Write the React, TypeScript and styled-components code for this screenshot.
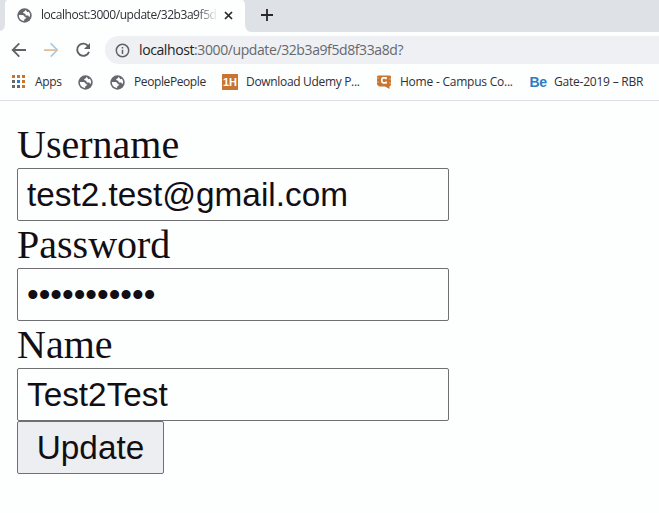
import React from 'react';
import styled, { createGlobalStyle } from 'styled-components';

const Global = createGlobalStyle`
  * { box-sizing: border-box; }
  body { margin: 0; background: #fdfefe; overflow: hidden; }
`;

const Window = styled.div`
  width: 659px;
  height: 513px;
  overflow: hidden;
  background: #fdfefe;
  font-family: 'Open Sans', 'Noto Sans', sans-serif;
  color: #2f3035;
`;

const TabStrip = styled.div`
  display: flex;
  height: 32px;
  background: #fdfefe;
`;

const StripEdge = styled.div<{ $side: 'left' | 'right' }>`
  background: #dee1e6;
  height: 32px;
  ${p => p.$side === 'left'
    ? 'width: 7px; height: 31px; clip-path: path("M0 0H7Q5 1 5 4V24Q5 30 0 31Z");'
    : 'flex: 1; clip-path: path("M0 0H417V32H8Q2 31 2 24V6Q2 2 0 0Z");'}
`;

const Tab = styled.div`
  width: 236px;
  display: flex;
  align-items: center;
  padding: 0 10px 2px 10px;
`;

const TabTitle = styled.span`
  margin-left: 9px;
  width: 183px;
  white-space: nowrap;
  font-size: 12px;
  line-height: 18px;
  letter-spacing: -0.44px;
  mask-image: linear-gradient(90deg, #000 155px, transparent 177px);
`;

const CloseIcon = styled.svg`
  flex: none;
`;

const NewTab = styled.div`
  display: flex;
  padding: 9px 0 0 18px;
`;

const Toolbar = styled.div`
  height: 36px;
  display: flex;
  align-items: center;
  padding-left: 11px;
`;

const NavIcon = styled.svg`
  flex: none;
  margin-right: 16px;
`;

const AddressBar = styled.div`
  display: flex;
  align-items: center;
  flex: 1;
  height: 28px;
  margin-left: -2px;
  padding-left: 10px;
  border-radius: 14px 0 0 14px;
  background: #eef0f3;
`;

const Url = styled.span`
  margin-left: 9px;
  font-size: 14px;
  line-height: 20px;
  white-space: nowrap;
  color: #66686d;
  letter-spacing: -0.4px;
`;

const Host = styled.span`
  color: #222327;
`;

const BookmarkBar = styled.div`
  display: grid;
  grid-template-columns: 67px 32px 112px 154px 154px 129px;
  align-items: center;
  height: 33px;
  padding: 0 0 4px 11px;
  border-bottom: 1px solid #dcdfe5;
`;

const Bookmark = styled.div`
  display: flex;
  align-items: center;
  white-space: nowrap;
`;

const BookmarkText = styled.span<{ $gap: number; $spacing: number }>`
  margin-left: ${p => p.$gap}px;
  letter-spacing: ${p => p.$spacing}px;
  font-size: 12px;
  line-height: 16px;
`;

const Form = styled.form`
  display: flex;
  flex-direction: column;
  align-items: flex-start;
  padding: 22px 0 0 17px;
`;

const Label = styled.label`
  height: 45px;
  font: 40px/44px 'Liberation Serif', serif;
  color: #120e14;
`;

const Field = styled.input`
  display: block;
  width: 432px;
  height: 53px;
  margin: 0 0 2px;
  padding: 2px 9px;
  border: 1px solid #716e74;
  border-radius: 2px;
  outline: none;
  background: #fdfefe;
  color: #120e14;
  font: 33.33px 'Liberation Sans', sans-serif;
`;

const Submit = styled.button`
  width: 147px;
  height: 53px;
  margin-top: -2px;
  padding: 0;
  border: 1px solid #716e74;
  border-radius: 2px;
  background: #eceef2;
  color: #120e14;
  font: 33.33px 'Liberation Sans', sans-serif;
`;

const Globe = () => (
  <svg width="15" height="15" viewBox="0 0 15 15">
    <circle cx="7.5" cy="7.5" r="7.2" fill="#66676c" />
    <path d="M8.6 1.9Q7.6 3.8 6 4.2Q6.2 5.6 8 5.7Q8.8 6 8.7 7.4H11.3L12.2 9.2Q13.2 8.2 13.1 6.4Q12.8 4.8 11.8 3.7L10.2 4.3L9.6 3Z" fill="#fdfefe" />
    <path d="M1.9 6.9H5.6Q7.7 7.2 7.8 9.2H9.3Q9.2 10.9 7.5 11L7 12.9Q3.2 12.6 2 9Z" fill="#fdfefe" />
  </svg>
);

const AppsGrid = () => (
  <svg width="15" height="15" viewBox="0 0 15 15">
    {['#c87531', '#c87531', '#c87531', '#69666b', '#2e7fca', '#c87531', '#69666b', '#69666b', '#c87531'].map((fill, i) => (
      <rect key={i} x={1 + (i % 3) * 5} y={Math.floor(i / 3) * 5} width="3" height="3" fill={fill} />
    ))}
  </svg>
);

const BadgeLabel = styled.span<{ $kind: 'block' | 'plain' }>`
  display: flex;
  align-items: center;
  justify-content: center;
  width: 16px;
  height: 16px;
  font: bold ${p => (p.$kind === 'block' ? '11px' : '14px')}/16px 'Liberation Sans', sans-serif;
  background: ${p => (p.$kind === 'block' ? '#c87531' : 'transparent')};
  color: ${p => (p.$kind === 'block' ? '#fdfefe' : '#2e7bc4')};
  letter-spacing: ${p => (p.$kind === 'block' ? '0' : '-0.4px')};
`;

const CampusIcon = () => (
  <svg width="16" height="16" viewBox="0 0 16 16">
    <path d="M1 2.5 2 1.5H14L15 2.5V11L13.5 12.5V15L9 12.5H3L1 10.5Z" fill="#c87531" />
    <path d="M1 4H3M1 8H3M13 5H15M13 9H15" stroke="#e9c49d" strokeWidth=".8" />
    <path d="M10 5.2V3.8H7.2Q5.8 3.8 5.8 6.2T7.2 8.8H10V7.5" fill="none" stroke="#fdfefe" strokeWidth="1.7" />
  </svg>
);

export default function App() {
  return (
    <>
      <Global />
      <Window>
        <TabStrip>
          <StripEdge $side="left" />
          <Tab>
            <Globe />
            <TabTitle>localhost:3000/update/32b3a9f5d</TabTitle>
            <CloseIcon width="9" height="9" viewBox="0 0 9 9">
              <path d="M1 1 8 8M8 1 1 8" stroke="#29262d" strokeWidth="1.7" />
            </CloseIcon>
          </Tab>
          <StripEdge $side="right">
            <NewTab>
              <svg width="12" height="12" viewBox="0 0 12 12">
                <path d="M6 0V12M0 6H12" stroke="#29262d" strokeWidth="1.8" />
              </svg>
            </NewTab>
          </StripEdge>
        </TabStrip>
        <Toolbar>
          <NavIcon width="16" height="16" viewBox="0 0 16 16" fill="none" stroke="#626168" strokeWidth="1.8">
            <path d="M15 8H2M8.3 1.3 1.7 8 8.3 14.7" />
          </NavIcon>
          <NavIcon width="16" height="16" viewBox="0 0 16 16" fill="none" stroke="#a9cae4" strokeWidth="1.7">
            <path d="M1 8H14M7.7 1.3 14.3 8 7.7 14.7" />
            <path d="M1 8.5H14" stroke="#dfbd95" strokeWidth="1" />
          </NavIcon>
          <NavIcon width="16" height="16" viewBox="0 0 16 16">
            <path d="M13.4 4.4A6.1 6.1 0 1 0 14 9.8" fill="none" stroke="#626168" strokeWidth="1.9" />
            <path d="M15 1V7H9Z" fill="#626168" />
          </NavIcon>
          <AddressBar>
            <svg width="15" height="15" viewBox="0 0 15 15" fill="none" stroke="#626168" strokeWidth="1.5">
              <circle cx="7.5" cy="7.5" r="6.2" />
              <path d="M7.5 6.7V11M7.5 4V5.5" />
            </svg>
            <Url><Host>localhost</Host>:3000/update/32b3a9f5d8f33a8d?</Url>
          </AddressBar>
        </Toolbar>
        <BookmarkBar>
          <Bookmark><AppsGrid /><BookmarkText $gap={9} $spacing={-0.3}>Apps</BookmarkText></Bookmark>
          <Bookmark><Globe /></Bookmark>
          <Bookmark><Globe /><BookmarkText $gap={9} $spacing={-0.4}>PeoplePeople</BookmarkText></Bookmark>
          <Bookmark><BadgeLabel $kind="block">1H</BadgeLabel><BookmarkText $gap={8} $spacing={-0.32}>Download Udemy P...</BookmarkText></Bookmark>
          <Bookmark><CampusIcon /><BookmarkText $gap={8} $spacing={-0.23}>Home - Campus Co...</BookmarkText></Bookmark>
          <Bookmark><BadgeLabel $kind="plain">Be</BadgeLabel><BookmarkText $gap={8} $spacing={-0.22}>Gate-2019 – RBR</BookmarkText></Bookmark>
        </BookmarkBar>
        <Form onSubmit={e => e.preventDefault()}>
          <Label htmlFor="username">Username</Label>
          <Field id="username" defaultValue="test2.test@gmail.com" spellCheck={false} />
          <Label htmlFor="password">Password</Label>
          <Field id="password" type="password" defaultValue="testtest123" />
          <Label htmlFor="name">Name</Label>
          <Field id="name" defaultValue="Test2Test" spellCheck={false} />
          <Submit type="submit">Update</Submit>
        </Form>
      </Window>
    </>
  );
}
